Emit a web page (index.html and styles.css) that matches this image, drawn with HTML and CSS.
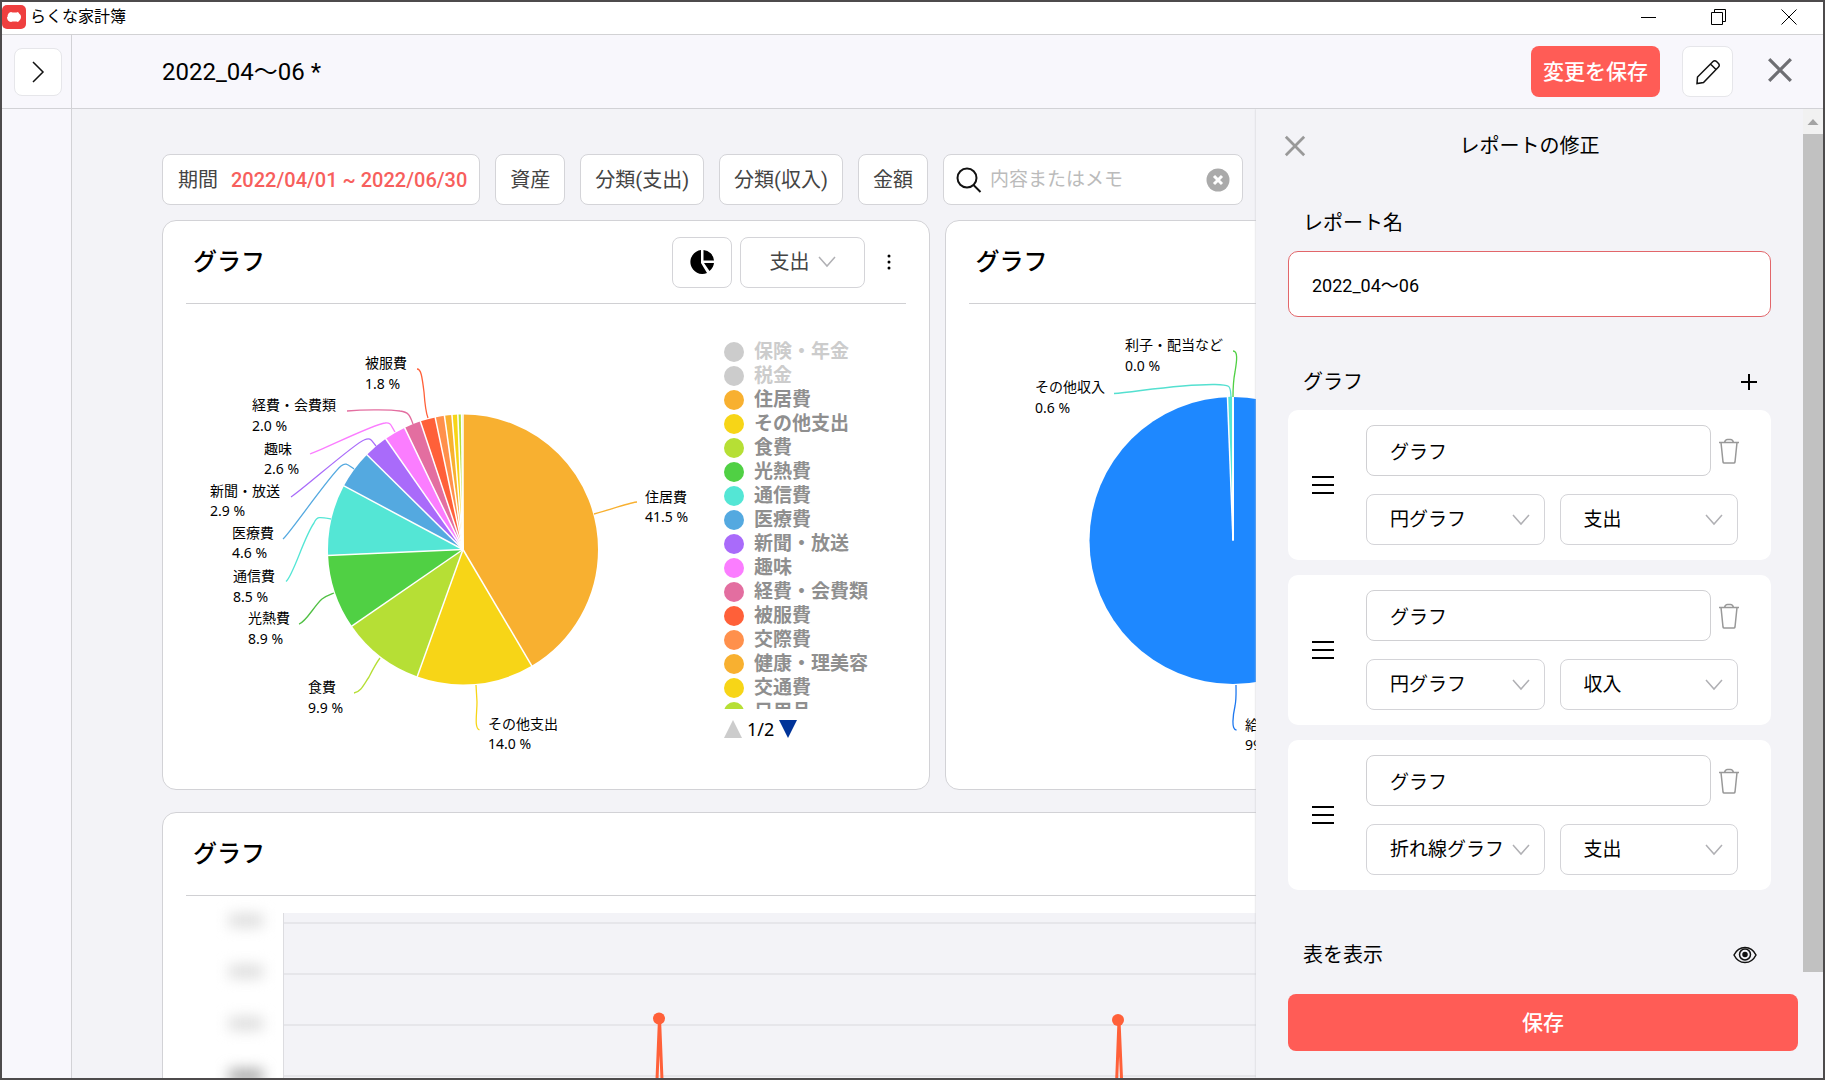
FILE: index.html
```html
<!DOCTYPE html>
<html lang="ja">
<head>
<meta charset="utf-8">
<title>らくな家計簿</title>
<link rel="stylesheet" href="styles.css">
</head>
<body class="window">
<svg class="symbols" aria-hidden="true">
  <symbol id="chevron" viewBox="0 0 18 12"><path d="M1 1l8 9 8-9" fill="none" stroke="currentColor" stroke-width="1.5"/></symbol>
  <symbol id="cross" viewBox="0 0 24 24"><path d="M2 2l20 20M22 2L2 22" fill="none" stroke="currentColor" stroke-width="3"/></symbol>
  <symbol id="trash" viewBox="0 0 22 26"><path d="M1 4.500h20M3 4.500l2 19.500q.2 1 1.200 1h9.600q1 0 1.200-1l2-19.500M6.500 4.500c.5-2 1.500-3 3-3h3c1.500 0 2.500 1 3 3" fill="none" stroke="currentColor" stroke-width="1.500"/></symbol>
  <symbol id="bars" viewBox="0 0 22 18"><path d="M0 1h22M0 9h22M0 17h22" stroke="currentColor" stroke-width="2"/></symbol>
</svg>

<header class="titlebar">
  <svg class="app-logo" viewBox="0 0 24 24"><rect width="24" height="24" rx="5" fill="#ef3f3f"/><path d="M5.500 12c0-3 1.500-4.500 3.500-5l1.500.5h4l1.500-.5 1.500 2c1 .5 1.500 1.500 1.500 3s-.6 2.500-1.600 3.500l-1.400 1.500-1.500-.5h-4l-1.500.5c-2.500-.5-4-2-4-5z" fill="#fff"/></svg>
  <span class="app-name">らくな家計簿</span>
  <div class="window-buttons">
    <button aria-label="最小化"><svg width="16" height="16"><path d="M0 8.500h15" stroke="#000"/></svg></button>
    <button aria-label="元に戻す"><svg width="16" height="16" fill="none" stroke="#000"><path d="M.5 3.500h11v12H.5zM3.500 3.500v-3h11v12h-3"/></svg></button>
    <button aria-label="閉じる"><svg width="16" height="16"><path d="M.5.5l15 15M15.500.5l-15 15" stroke="#000"/></svg></button>
  </div>
</header>

<div class="app">
  <div class="rail-head">
    <button class="icon-button icon-button-rail" aria-label="メニューを開く"><svg width="14" height="24" fill="none" stroke="#111" stroke-width="1.500"><path d="M2 2l10 10L2 22"/></svg></button>
  </div>
  <div class="topbar">
    <h1 class="report-title">2022_04〜06 *</h1>
    <button class="primary primary-small">変更を保存</button>
    <button class="icon-button" aria-label="編集"><svg width="26" height="26" viewBox="0 0 26 26" fill="none" stroke="#111" stroke-width="1.500"><path d="M2 24.500l.5-6.500L18 2.500c1-1 2.500-1 3.500 0l2 2c1 1 1 2.500 0 3.500L8.500 23.500zM15.500 5l5.500 5.500"/></svg></button>
    <button class="close-report" aria-label="レポートを閉じる"><svg width="26" height="26"><use href="#cross"/></svg></button>
  </div>
  <nav class="rail" aria-label="メニュー"></nav>

  <main class="stage">
    <div class="report">
      <div class="filters">
        <button class="chip chip-period">期間 <span class="period">2022/04/01 ~ 2022/06/30</span></button>
        <button class="chip">資産</button>
        <button class="chip">分類(支出)</button>
        <button class="chip">分類(収入)</button>
        <button class="chip">金額</button>
        <div class="search">
          <svg width="26" height="26" viewBox="0 0 26 26" fill="none" stroke="#111" stroke-width="2"><circle cx="11" cy="11" r="9.500"/><path d="M17.500 18l7 7"/></svg>
          <input class="search-input" type="text" placeholder="内容またはメモ" aria-label="内容またはメモ">
          <button class="clear" aria-label="クリア"><svg width="24" height="24"><circle cx="12" cy="12" r="11.500" fill="#aaa"/><path d="M8 8l8 8M16 8l-8 8" stroke="#fff" stroke-width="3"/></svg></button>
        </div>
      </div>

      <div class="cards">
        <section class="card">
          <div class="card-head">
            <h2 class="card-title">グラフ</h2>
            <button class="chart-type" aria-label="円グラフ"><svg width="26" height="26" viewBox="0 0 26 26"><path d="M12 1A12 12 0 1 0 18 24L12 14z"/><path d="M14.500 1v10.500H25A11.500 11.500 0 0 0 14.500 1zM15 14h10a12 12 0 0 1-4.500 8z"/></svg></button>
            <span class="picker picker-head">
              <select aria-label="収支"><option>支出</option><option>収入</option></select>
              <svg class="picker-arrow" width="18" height="12"><use href="#chevron"/></svg>
            </span>
            <button class="more" aria-label="その他"><svg width="4" height="18"><circle cx="2" cy="3" r="1.500"/><circle cx="2" cy="9" r="1.500"/><circle cx="2" cy="15" r="1.500"/></svg></button>
          </div>
          <div class="chart-row">
            <svg class="chart" width="532" height="470" viewBox="186 304 532 470">
              <g class="slices" transform="translate(463 549.500) rotate(-90)">
                <circle r="67.500" pathLength="100" stroke="#f8b030" stroke-dasharray="41.5 100"/>
                <circle r="67.500" pathLength="100" stroke="#f7d517" stroke-dasharray="14 100" stroke-dashoffset="-41.5"/>
                <circle r="67.500" pathLength="100" stroke="#b6df35" stroke-dasharray="9.9 100" stroke-dashoffset="-55.5"/>
                <circle r="67.500" pathLength="100" stroke="#50d044" stroke-dasharray="8.9 100" stroke-dashoffset="-65.4"/>
                <circle r="67.500" pathLength="100" stroke="#54e6d5" stroke-dasharray="8.5 100" stroke-dashoffset="-74.3"/>
                <circle r="67.500" pathLength="100" stroke="#54a9e0" stroke-dasharray="4.6 100" stroke-dashoffset="-82.8"/>
                <circle r="67.500" pathLength="100" stroke="#a96bfa" stroke-dasharray="2.9 100" stroke-dashoffset="-87.4"/>
                <circle r="67.500" pathLength="100" stroke="#fb7dff" stroke-dasharray="2.6 100" stroke-dashoffset="-90.3"/>
                <circle r="67.500" pathLength="100" stroke="#e36ea0" stroke-dasharray="2 100" stroke-dashoffset="-92.9"/>
                <circle r="67.500" pathLength="100" stroke="#ff6039" stroke-dasharray="1.8 100" stroke-dashoffset="-94.9"/>
                <circle r="67.500" pathLength="100" stroke="#ff904c" stroke-dasharray="1.1 100" stroke-dashoffset="-96.7"/>
                <circle r="67.500" pathLength="100" stroke="#f8b030" stroke-dasharray="0.9 100" stroke-dashoffset="-97.8"/>
                <circle r="67.500" pathLength="100" stroke="#f7d517" stroke-dasharray="0.7 100" stroke-dashoffset="-98.7"/>
                <circle r="67.500" pathLength="100" stroke="#b6df35" stroke-dasharray="0.6 100" stroke-dashoffset="-99.4"/>
              </g>
              <g class="dividers" transform="translate(463 549.500)">
                <path d="M0 0V-136"/>
                <path d="M0 0V-136" transform="rotate(149.4)"/>
                <path d="M0 0V-136" transform="rotate(199.8)"/>
                <path d="M0 0V-136" transform="rotate(235.4)"/>
                <path d="M0 0V-136" transform="rotate(267.5)"/>
                <path d="M0 0V-136" transform="rotate(298.1)"/>
                <path d="M0 0V-136" transform="rotate(314.6)"/>
                <path d="M0 0V-136" transform="rotate(325.1)"/>
                <path d="M0 0V-136" transform="rotate(334.4)"/>
                <path d="M0 0V-136" transform="rotate(341.6)"/>
                <path d="M0 0V-136" transform="rotate(348.1)"/>
                <path d="M0 0V-136" transform="rotate(352.1)"/>
                <path d="M0 0V-136" transform="rotate(355.3)"/>
                <path d="M0 0V-136" transform="rotate(357.8)"/>
                <path d="M0 0V-136" transform="rotate(359.4)"/>
              </g>
              <g class="leaders">
                <path stroke="#f8b030" d="M637 502C632 502 616 508 594 514"/>
                <path stroke="#f7d517" d="M479.500 730C474 728 477 714 477 702L476 685"/>
                <path stroke="#b6df35" d="M354 693C361 692 364 684 369 677C373 669 377 662 380 658"/>
                <path stroke="#50c044" d="M299 624C306 622 314 606 322 599C326 596 329 595 334 593"/>
                <path stroke="#54e6d5" d="M286 581.500C293 576 304 537 314 523C317 516 320 517 331 519"/>
                <path stroke="#54a9e0" d="M283 539C290 533 330 475 341 466C346 462 348 465 354 469"/>
                <path stroke="#a96bfa" d="M291 497C301 491 355 443 364 440C371 437 371 440 376 446"/>
                <path stroke="#fb7dff" d="M310 454C322 450 374 424 385 423C391 422 391 426 395 432"/>
                <path stroke="#e36ea0" d="M347 411C360 410 388 409 400 411C409 412 410 416 413 424"/>
                <path stroke="#ff6039" d="M417 369C421 369 422 376 424 392C425 406 426 413 428 418"/>
              </g>
              <g class="labels">
                <text x="645" y="502">住居費</text><text x="645" y="522">41.5 %</text>
                <text x="488" y="729">その他支出</text><text x="488" y="749">14.0 %</text>
                <text x="308" y="692">食費</text><text x="308" y="713">9.9 %</text>
                <text x="248" y="623">光熱費</text><text x="248" y="644">8.9 %</text>
                <text x="233" y="581">通信費</text><text x="233" y="602">8.5 %</text>
                <text x="232" y="538">医療費</text><text x="232" y="558">4.6 %</text>
                <text x="210" y="496">新聞・放送</text><text x="210" y="516">2.9 %</text>
                <text x="264" y="454">趣味</text><text x="264" y="474">2.6 %</text>
                <text x="252" y="410">経費・会費類</text><text x="252" y="431">2.0 %</text>
                <text x="365" y="368">被服費</text><text x="365" y="389">1.8 %</text>
              </g>
            </svg>
            <div class="legend">
              <ul class="legend-list">
                <li class="off"><i style="background:#ccc"></i>保険・年金</li>
                <li class="off"><i style="background:#ccc"></i>税金</li>
                <li><i style="background:#f8b030"></i>住居費</li>
                <li><i style="background:#f7d517"></i>その他支出</li>
                <li><i style="background:#b6df35"></i>食費</li>
                <li><i style="background:#50d044"></i>光熱費</li>
                <li><i style="background:#54e6d5"></i>通信費</li>
                <li><i style="background:#54a9e0"></i>医療費</li>
                <li><i style="background:#a96bfa"></i>新聞・放送</li>
                <li><i style="background:#fb7dff"></i>趣味</li>
                <li><i style="background:#e36ea0"></i>経費・会費類</li>
                <li><i style="background:#ff6039"></i>被服費</li>
                <li><i style="background:#ff904c"></i>交際費</li>
                <li><i style="background:#f8b030"></i>健康・理美容</li>
                <li><i style="background:#f7d517"></i>交通費</li>
                <li><i style="background:#b6df35"></i>日用品</li>
              </ul>
              <div class="pager">
                <button aria-label="前へ"><svg width="18" height="18"><path d="M9 0l9 18H0z" fill="#ccc"/></svg></button>
                <span>1/2</span>
                <button aria-label="次へ"><svg width="18" height="18"><path d="M0 0h18L9 18z" fill="#039"/></svg></button>
              </div>
            </div>
          </div>
        </section>

        <section class="card">
          <div class="card-head"><h2 class="card-title">グラフ</h2></div>
          <div class="chart-row">
            <svg class="chart" width="532" height="470" viewBox="969 304 532 470">
              <circle cx="1233" cy="540.500" r="143.500" fill="#1e88ff"/>
              <path d="M1233 540.500L1227.600 397A144 144 0 0 1 1233 396.500z" fill="#54e6d5"/>
              <g class="dividers" transform="translate(1233 540.500)">
                <path d="M0 0V-145" stroke-width="2"/>
                <path d="M0 0V-145" transform="rotate(-2.200)"/>
              </g>
              <g class="leaders">
                <path stroke="#50d044" d="M1233 351C1238 351 1237 360 1235 372C1233 382 1233 388 1233 397"/>
                <path stroke="#54e0d0" d="M1114 393.500C1135 392 1180 384 1215 384.500C1232 385 1230 386 1231 397"/>
                <path stroke="#1e78ef" d="M1236.500 730C1231 730 1233 715 1235 706C1236.500 698 1236 692 1236 685"/>
              </g>
              <g class="labels">
                <text x="1125" y="350">利子・配当など</text><text x="1125" y="371">0.0 %</text>
                <text x="1035" y="392">その他収入</text><text x="1035" y="413">0.6 %</text>
                <text x="1245" y="730">給与</text><text x="1245" y="750">99.4 %</text>
              </g>
            </svg>
          </div>
        </section>

        <section class="card card-wide">
          <div class="card-head"><h2 class="card-title">グラフ</h2></div>
          <svg class="line-chart" width="1500" height="400" viewBox="186 896 1500 400">
            <rect x="283" y="913" width="1403" height="340" fill="#f3f3f7"/>
            <path d="M283.500 913v340" stroke="#dcdce0"/>
            <path d="M284 923h1402M284 974h1402M284 1025h1402M284 1076h1402" stroke="#e6e6ea" stroke-width="2"/>
            <g class="masked">
              <rect x="229" y="914" width="34" height="13"/><rect x="229" y="965" width="34" height="13"/><rect x="229" y="1017" width="34" height="13"/><rect class="masked-strong" x="229" y="1069" width="34" height="14"/>
            </g>
            <path class="series" d="M650 1253L659.500 1018L669 1253M1110 1253L1119 1020L1129 1253"/>
            <circle cx="659" cy="1018.500" r="6" fill="#ff6039"/><circle cx="1118" cy="1020" r="6" fill="#ff6039"/>
          </svg>
        </section>
      </div>
    </div>

    <aside class="drawer">
      <div class="drawer-body">
        <form class="drawer-form" id="report-form">
          <div class="drawer-head">
            <button type="button" class="drawer-close" aria-label="閉じる"><svg width="22" height="22"><use href="#cross"/></svg></button>
            <h2 class="drawer-title">レポートの修正</h2>
          </div>
          <label class="field-label" for="report-name">レポート名</label>
          <input class="name-input" id="report-name" type="text" value="2022_04〜06">

          <div class="group-head">
            <h3 class="field-label">グラフ</h3>
            <button type="button" aria-label="グラフを追加"><svg width="16" height="16"><path d="M0 8h16M8 0v16" stroke="#000" stroke-width="2"/></svg></button>
          </div>
          <ul class="items">
            <li class="item">
              <svg class="handle" width="22" height="18"><use href="#bars"/></svg>
              <div class="item-fields">
                <div class="item-row"><input class="item-name" type="text" value="グラフ" aria-label="グラフ名"><button type="button" class="delete" aria-label="削除"><svg width="22" height="26"><use href="#trash"/></svg></button></div>
                <div class="item-selects">
                  <span class="picker"><select aria-label="種類"><option>円グラフ</option></select><svg class="picker-arrow" width="18" height="12"><use href="#chevron"/></svg></span>
                  <span class="picker"><select aria-label="収支"><option>支出</option></select><svg class="picker-arrow" width="18" height="12"><use href="#chevron"/></svg></span>
                </div>
              </div>
            </li>
            <li class="item">
              <svg class="handle" width="22" height="18"><use href="#bars"/></svg>
              <div class="item-fields">
                <div class="item-row"><input class="item-name" type="text" value="グラフ" aria-label="グラフ名"><button type="button" class="delete" aria-label="削除"><svg width="22" height="26"><use href="#trash"/></svg></button></div>
                <div class="item-selects">
                  <span class="picker"><select aria-label="種類"><option>円グラフ</option></select><svg class="picker-arrow" width="18" height="12"><use href="#chevron"/></svg></span>
                  <span class="picker"><select aria-label="収支"><option>収入</option></select><svg class="picker-arrow" width="18" height="12"><use href="#chevron"/></svg></span>
                </div>
              </div>
            </li>
            <li class="item">
              <svg class="handle" width="22" height="18"><use href="#bars"/></svg>
              <div class="item-fields">
                <div class="item-row"><input class="item-name" type="text" value="グラフ" aria-label="グラフ名"><button type="button" class="delete" aria-label="削除"><svg width="22" height="26"><use href="#trash"/></svg></button></div>
                <div class="item-selects">
                  <span class="picker"><select aria-label="種類"><option>折れ線グラフ</option></select><svg class="picker-arrow" width="18" height="12"><use href="#chevron"/></svg></span>
                  <span class="picker"><select aria-label="収支"><option>支出</option></select><svg class="picker-arrow" width="18" height="12"><use href="#chevron"/></svg></span>
                </div>
              </div>
            </li>
          </ul>
          <div class="group-head">
            <h3 class="field-label">表を表示</h3>
            <button type="button" aria-label="表の表示を切り替え"><svg width="24" height="18" fill="none" stroke="#111" stroke-width="1.500"><path d="M1 9C6-1 18-1 23 9C18 19 6 19 1 9z"/><circle cx="12" cy="8.500" r="5.500"/><circle cx="12" cy="8.500" r="2" fill="#111"/></svg></button>
          </div>
        </form>
        <div class="scrollbar" aria-hidden="true">
          <svg class="scroll-up" width="20" height="25"><path d="M4.500 16l5.500-6 5.500 6z" fill="#a3a3a3"/></svg>
          <div class="scroll-thumb"></div>
        </div>
      </div>
      <div class="drawer-foot"><button class="primary" form="report-form">保存</button></div>
    </aside>
  </main>
</div>
</body>
</html>
```

FILE: styles.css
```css
*, *::before, *::after { box-sizing: border-box; }

body, h1, h2, h3, ul { margin: 0; padding: 0; }
ul { list-style: none; }
svg { display: block; flex: none; }

button, input, select {
  margin: 0;
  padding: 0;
  border: 0;
  background: none;
  color: inherit;
  font: inherit;
}

.symbols { display: none; }

.window {
  display: flex;
  flex-direction: column;
  height: 100vh;
  overflow: hidden;
  border: 2px solid #4d4b4c;
  background: #f3f3f7;
  color: #000;
  font: 20px/24px Roboto, "Noto Sans CJK JP", sans-serif;
}

/* Title bar */
.titlebar {
  display: flex;
  align-items: center;
  gap: 4px;
  height: 33px;
  padding-bottom: 2px;
  flex: none;
  border-bottom: 1px solid #d2d2d4;
  background: #fff;
}
.app-logo { width: 24px; height: 24px; }
.app-name { flex: 1; font-size: 16px; }
.window-buttons { display: flex; gap: 54px; padding-right: 26px; }
.window-buttons button { display: block; }

/* Shell */
.app {
  display: grid;
  grid-template: 74px minmax(0, 1fr) / 70px minmax(0, 1fr);
  flex: 1;
  min-height: 0;
}
.rail-head, .topbar { border-bottom: 1px solid #d2d2d6; background: #f8f7fc; }
.rail-head, .rail { border-right: 1px solid #d2d2d6; }
.rail { background: #f8f7fc; }
.rail-head { display: grid; place-items: center; padding-left: 2px; }

.topbar {
  display: flex;
  align-items: center;
  padding: 0 30px 0 90px;
}
.report-title { flex: 1; font-size: 24px; font-weight: 400; line-height: 32px; }

.icon-button {
  display: grid;
  place-items: center;
  width: 51px;
  height: 51px;
  border: 1px solid #e6e6ea;
  border-radius: 8px;
  background: #fff;
}
.icon-button-rail { width: 48px; height: 48px; }

.primary {
  width: 100%;
  height: 57px;
  border-radius: 8px;
  background: #ff5c56;
  color: #fff;
  font-size: 21px;
  font-weight: 500;
}
.primary-small { width: 129px; height: 51px; margin-right: 22px; }
.close-report { margin-left: 34px; padding-bottom: 4px; color: #6e6e73; }

/* Report */
.stage { position: relative; overflow: hidden; }
.report {
  display: flex;
  flex-direction: column;
  gap: 15px;
  padding: 45px 111px 0 90px;
}
.filters { display: flex; gap: 15px; color: #444; }
.chip, .search, .chart-type, .picker {
  height: 51px;
  border: 1px solid #d4d4d8;
  border-radius: 8px;
  background: #fff;
}
.chip { flex: none; padding: 0 14px; white-space: nowrap; }
.chip-period { display: flex; align-items: center; gap: 13px; padding: 0 12px 0 15px; }
.period { color: #f75f5d; font-weight: 500; }
.search {
  display: flex;
  align-items: center;
  gap: 8px;
  width: 300px;
  padding: 0 12px;
}
.search-input { flex: 1; min-width: 0; font-size: 19px; outline: 0; }
.search-input::placeholder { color: #bbb; opacity: 1; }

.cards {
  display: grid;
  grid-template-columns: repeat(2, minmax(0, 1fr));
  gap: 22px 15px;
}
.card {
  min-height: 570px;
  padding: 0 23px;
  border: 1px solid #d2d2d6;
  border-radius: 14px;
  background: #fff;
}
.card-wide { grid-column: 1 / -1; }
.card-head {
  display: flex;
  align-items: center;
  height: 83px;
  padding-left: 7px;
  border-bottom: 1px solid #d0d0d3;
}
.card-title { flex: 1; font-size: 24px; font-weight: 500; line-height: 32px; }
.chart-type { display: grid; place-items: center; width: 60px; margin-right: 8px; }
.more { width: 4px; margin: 0 15px 0 22px; }

.picker { display: grid; grid-template-columns: 1fr auto; align-items: center; }
.picker select {
  grid-area: 1 / 1 / 2 / 3;
  width: 100%;
  height: 100%;
  padding-left: 23px;
  appearance: none;
  font-size: 19px;
}
.picker-arrow { grid-area: 1 / 2; margin-right: 14px; color: #b0b0b4; pointer-events: none; }
.picker-head { width: 125px; color: #444; }
.picker-head select { padding-left: 29px; font-size: 20px; }
.picker-head .picker-arrow { margin-right: 28px; }

.chart-row { display: flex; gap: 6px; }
.slices { fill: none; stroke-width: 135px; }
.dividers { stroke: #fff; stroke-width: 1.5px; }
.leaders { fill: none; stroke-width: 1.3px; }
.labels { font: 14px "Noto Sans", "Noto Sans CJK JP", sans-serif; }
.series { fill: none; stroke: #ff6039; stroke-width: 3px; }
.masked { fill: #dcdcdc; filter: blur(7px); }
.masked-strong { fill: #a8a8a8; }

.legend { padding-top: 36px; }
.legend-list { height: 369px; overflow: hidden; }
.legend-list li {
  display: flex;
  align-items: center;
  gap: 10px;
  height: 24px;
  color: #8f8f8f;
  font-size: 19px;
  font-weight: 700;
  white-space: nowrap;
}
.legend-list .off { color: #ccc; }
.legend-list i { width: 20px; height: 20px; border-radius: 50%; }
.pager {
  display: flex;
  align-items: center;
  gap: 5px;
  margin-top: 8px;
  font: 18px/24px "Noto Sans", sans-serif;
}

/* Edit drawer, lies over the report */
.drawer {
  position: absolute;
  inset: 0 0 0 auto;
  display: flex;
  flex-direction: column;
  width: 567px;
  background: #f3f3f7;
  box-shadow: 0 0 2px #c8c8cc;
}
.drawer-body { display: flex; flex: 1; min-height: 0; overflow: hidden; }
.drawer-form { flex: 1; padding: 25px 32px 0; }
.drawer-head {
  display: grid;
  grid-template-columns: 22px 1fr 22px;
  align-items: center;
  margin: 0 -4px 53px;
}
.drawer-close { height: 22px; color: #999; }
.drawer-title { font-size: 20px; font-weight: 400; text-align: center; }
.field-label { display: block; padding-left: 15px; font-size: 20px; font-weight: 400; }
.name-input {
  width: 100%;
  height: 66px;
  margin-top: 16px;
  padding: 0 23px;
  border: 1px solid #e2666a;
  border-radius: 10px;
  background: #fff;
  font-size: 18px;
}
.group-head {
  display: flex;
  align-items: center;
  justify-content: space-between;
  margin-top: 53px;
  padding-right: 14px;
}

.items { display: grid; gap: 15px; margin-top: 16px; }
.item {
  display: flex;
  align-items: center;
  gap: 32px;
  height: 150px;
  padding: 0 33px 0 24px;
  border-radius: 10px;
  background: #fff;
}
.item-fields { display: grid; gap: 18px; flex: 1; min-width: 0; }
.item-row { display: flex; align-items: center; gap: 7px; }
.item-name {
  flex: 1;
  min-width: 0;
  height: 51px;
  padding: 0 23px;
  border: 1px solid #d0d0d3;
  border-radius: 8px;
  font-size: 19px;
}
.delete { width: 20px; color: #999; }
.item-selects { display: grid; grid-template-columns: 1fr 1fr; gap: 15px; }

.scrollbar { display: flex; flex-direction: column; width: 20px; background: #f1f1f1; }
.scroll-thumb { flex: 1; background: #c1c1c1; }
.drawer-foot { flex: none; padding: 22px 25px 27px 32px; }
```
